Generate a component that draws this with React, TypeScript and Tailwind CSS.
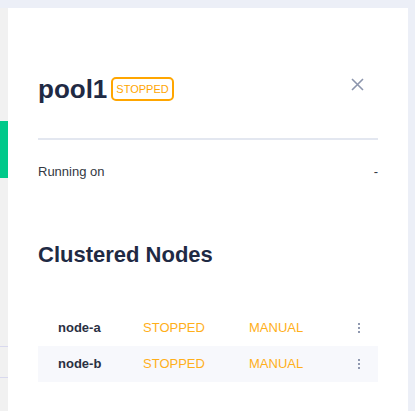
import React from 'react';

interface NodeRow {
  name: string;
  state: string;
  mode: string;
}

const nodes: NodeRow[] = [
  { name: 'node-a', state: 'STOPPED', mode: 'MANUAL' },
  { name: 'node-b', state: 'STOPPED', mode: 'MANUAL' },
];

const App: React.FC = () => {
  return (
    <div className="relative w-[415px] h-[411px] overflow-hidden bg-[#eceff7] font-['Liberation_Sans',Arial,sans-serif]">
      {/* page behind the drawer */}
      <div className="absolute left-0 top-[8px] bottom-0 w-[8px] bg-[#f1f1f1]">
        <div className="absolute left-0 top-[113px] h-[57px] w-[8px] bg-[#00c98a]"></div>
        <div className="absolute left-0 top-[338px] h-px w-[8px] bg-[#d9d9ee]"></div>
        <div className="absolute left-0 top-[369px] h-px w-[8px] bg-[#d9d9ee]"></div>
      </div>

      <div className="absolute left-[8px] top-[8px] w-[400px] bottom-0 bg-white px-[30px] flex flex-col">
        <div className="mt-[66px] flex items-center justify-between h-[30px]">
          <div className="flex items-center gap-[4px]">
            <h1 className="text-[26px] font-bold text-[#1f2a44] leading-none">pool1</h1>
            <span className="border-2 border-[#ffa600] rounded-[5px] px-[3px] h-[24px] flex items-center text-[11px] text-[#ffa600] leading-none">
              STOPPED
            </span>
          </div>
          <button className="mr-[14px] mb-[10px] text-[#8c95ad]">
            <svg width="13" height="13" viewBox="0 0 13 13" fill="none" stroke="currentColor" strokeWidth="1.6">
              <path d="M1 1l11 11M12 1L1 12" />
            </svg>
          </button>
        </div>

        <div className="mt-[34px] h-[2px] bg-[#e3e7f0]"></div>

        <div className="mt-[22px] flex justify-between text-[13px] text-[#333842]">
          <span>Running on</span>
          <span>-</span>
        </div>

        <h2 className="mt-[62px] text-[22px] font-bold text-[#1f2a44] leading-none">Clustered Nodes</h2>

        <div className="mt-[44px] flex flex-col">
          {nodes.map((n, i) => (
            <div
              key={n.name}
              className={`h-[36px] flex items-center text-[13px] ${i % 2 === 1 ? 'bg-[#f7f8fc]' : ''}`}
            >
              <span className="w-[105px] pl-[20px] font-bold text-[#2a3042]">{n.name}</span>
              <span className="w-[106px] text-[#ffaf1a]">{n.state}</span>
              <span className="flex-1 text-[#ffaf1a]">{n.mode}</span>
              <span className="mr-[18px] flex flex-col gap-[2px]">
                <span className="w-[2px] h-[2px] bg-[#9099b0]"></span>
                <span className="w-[2px] h-[2px] bg-[#9099b0]"></span>
                <span className="w-[2px] h-[2px] bg-[#9099b0]"></span>
              </span>
            </div>
          ))}
        </div>
      </div>
    </div>
  );
};

export default App;
